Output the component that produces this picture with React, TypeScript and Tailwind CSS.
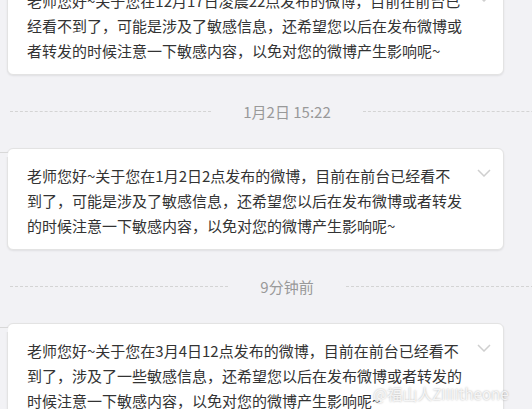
const messages = [
  [
    "老师您好~关于您在12月17日凌晨22点发布的微博，目前在前台已",
    "经看不到了，可能是涉及了敏感信息，还希望您以后在发布微博或",
    "者转发的时候注意一下敏感内容，以免对您的微博产生影响呢~",
  ],
  [
    "老师您好~关于您在1月2日2点发布的微博，目前在前台已经看不",
    "到了，可能是涉及了敏感信息，还希望您以后在发布微博或者转发",
    "的时候注意一下敏感内容，以免对您的微博产生影响呢~",
  ],
  [
    "老师您好~关于您在3月4日12点发布的微博，目前在前台已经看不",
    "到了，涉及了一些敏感信息，还希望您以后在发布微博或者转发的",
    "时候注意一下敏感内容，以免对您的微博产生影响呢~",
  ],
];

function Chevron() {
  return (
    <svg
      className="absolute right-[12px] top-[20px]"
      width="14"
      height="8"
      viewBox="0 0 14 8"
      fill="none"
    >
      <path d="M1 1l6 6 6-6" stroke="#cfcfcf" strokeWidth="1.5" />
    </svg>
  );
}

function Card({ lines, tail }: { lines: string[]; tail?: boolean }) {
  return (
    <div className="relative ml-[7px] w-[497px] rounded-md border border-[#e3e3e3] bg-white pt-[14px] pb-[11px] pl-[19px] shadow-[0_1px_2px_rgba(0,0,0,0.08)]">
      {tail && (
        <div className="absolute left-[-8px] top-[3px] h-[5px] w-[8px] border-t border-[#d8d8d8] bg-[#f2f2f5]" />
      )}
      <div className="text-[15px] leading-[25px] text-[#333]">
        {lines.map((l) => (
          <p key={l} className="whitespace-nowrap">
            {l}
          </p>
        ))}
      </div>
      <Chevron />
    </div>
  );
}

function Divider({ label }: { label: string }) {
  return (
    <div className="ml-[10px] flex h-[73px] w-[554px] items-center gap-[32px]">
      <div className="flex-1 border-t border-dashed border-[#d4d4d4]" />
      <span className="text-[15px] leading-[20px] text-[#999]">{label}</span>
      <div className="flex-1 border-t border-dashed border-[#d4d4d4]" />
    </div>
  );
}

export default function App() {
  return (
    <div
      className="relative h-[409px] w-[532px] overflow-hidden bg-[#f2f2f5]"
      style={{ fontFamily: '"Noto Sans CJK SC", "Noto Sans", sans-serif' }}
    >
      <div className="mt-[-27px] flex flex-col">
        <Card lines={messages[0]} />
        <Divider label="1月2日 15:22" />
        <Card lines={messages[1]} tail />
        <Divider label="9分钟前" />
        <Card lines={messages[2]} tail />
      </div>
      {/* watermark */}
      <span className="absolute left-[373px] top-[383px] text-[15px] text-white/80 [text-shadow:0_0_2px_rgba(0,0,0,0.35)]">
        @福山人ZIIIItheone
      </span>
    </div>
  );
}
